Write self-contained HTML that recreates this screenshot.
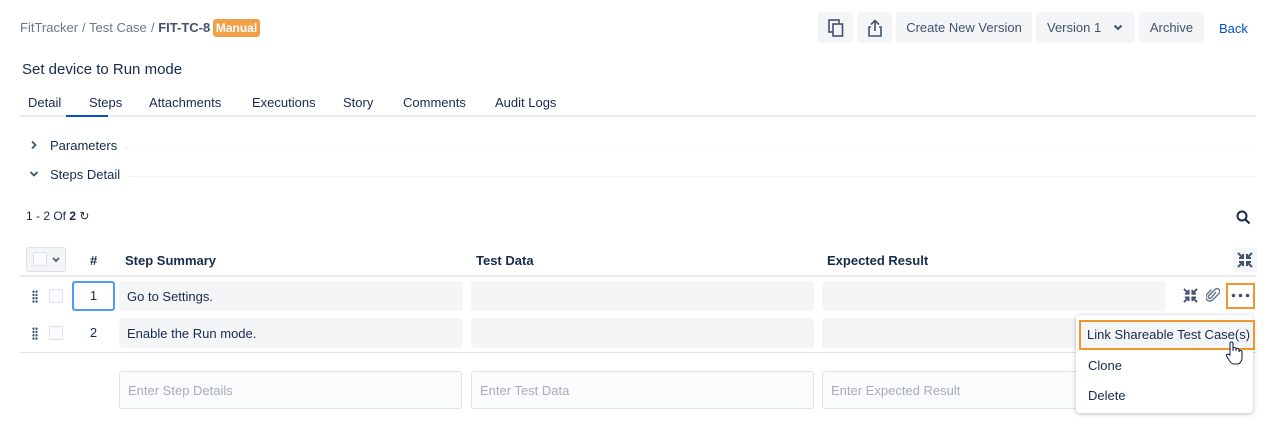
<!DOCTYPE html>
<html><head><meta charset="utf-8"><style>
*{box-sizing:border-box;margin:0;padding:0}
body{width:1280px;height:430px;position:relative;background:#fff;font-family:"Liberation Sans",sans-serif;color:#172b4d;overflow:hidden}
.a{position:absolute;white-space:nowrap}
.btn{position:absolute;top:12px;height:31px;background:#f4f5f7;border-radius:3px;font-size:13px;color:#42526e;display:flex;align-items:center;justify-content:center}
.cell{position:absolute;background:#f4f5f7;border-radius:3px;font-size:13px;padding-left:8px;display:flex;align-items:center}
.inp{position:absolute;top:371px;height:38px;border:1px solid #dfe1e6;background:#fafbfc;border-radius:3px;font-size:13px;color:#a5adba;padding-left:8px;display:flex;align-items:center}
.cb{position:absolute;width:14px;height:14px;border:1px solid #dfe1e6;border-radius:2px;background:#fafbfc}
.tab{position:absolute;top:95px;font-size:13px;color:#172b4d}
.hd{position:absolute;top:253px;font-size:13px;font-weight:bold}
.drag{position:absolute;width:6px;height:13px;background-image:radial-gradient(circle,#42526e 1.1px,transparent 1.3px);background-size:3px 3.3px}
</style></head><body>
<div class="a" style="left:20px;top:20px;font-size:13px;color:#6b778c">FitTracker</div>
<div class="a" style="left:82px;top:20px;font-size:13px;color:#6b778c">/ Test Case</div>
<div class="a" style="left:151px;top:20px;font-size:13px;color:#6b778c">/ <b style="color:#42526e">FIT-TC-8</b></div>
<div class="a" style="left:213px;top:19px;width:47px;height:18px;background:#f0a045;border-radius:3px;color:#fff;font-size:12px;font-weight:bold;text-align:center;line-height:18px">Manual</div>
<div class="btn" style="left:818px;width:35px"><svg width="16" height="18" viewBox="0 0 16 18"><rect x="1" y="1" width="10" height="12" fill="none" stroke="#42526e" stroke-width="1.6"/><rect x="5" y="5" width="9.5" height="12" fill="#f4f5f7" stroke="#42526e" stroke-width="1.6"/></svg></div>
<div class="btn" style="left:857px;width:35px"><svg width="16" height="18" viewBox="0 0 16 18"><path d="M8 12V2M4 5.5 8 1.5l4 4M4 8H2v9h12V8h-2" fill="none" stroke="#42526e" stroke-width="1.6"/></svg></div>
<div class="btn" style="left:896px;width:136px">Create New Version</div>
<div class="btn" style="left:1036px;width:99px;justify-content:flex-start;padding-left:11px">Version 1<svg style="margin-left:12px" width="10" height="7" viewBox="0 0 10 7"><path d="M1.5 1.5 5 5l3.5-3.5" fill="none" stroke="#42526e" stroke-width="2"/></svg></div>
<div class="btn" style="left:1139px;width:65px">Archive</div>
<div class="a" style="left:1219px;top:21px;font-size:13px;color:#0052cc">Back</div>
<div class="a" style="left:22px;top:61px;font-size:15px">Set device to Run mode</div>
<div class="tab" style="left:28px">Detail</div>
<div class="tab" style="left:89px">Steps</div>
<div class="tab" style="left:149px">Attachments</div>
<div class="tab" style="left:252px">Executions</div>
<div class="tab" style="left:343px">Story</div>
<div class="tab" style="left:403px">Comments</div>
<div class="tab" style="left:495px">Audit Logs</div>
<div class="a" style="left:20px;top:115px;width:1236px;height:2px;background:#ebecf0"></div>
<div class="a" style="left:66px;top:115px;width:42px;height:2px;background:#0052cc"></div>
<svg class="a" style="left:30px;top:140px" width="8" height="10" viewBox="0 0 8 10"><path d="M2 1.5 5.5 5 2 8.5" fill="none" stroke="#42526e" stroke-width="1.8"/></svg>
<div class="a" style="left:50px;top:138px;font-size:13px">Parameters</div>
<div class="a" style="left:124px;top:147px;width:1132px;border-top:1px dotted #ebecf0"></div>
<svg class="a" style="left:29px;top:170px" width="10" height="8" viewBox="0 0 10 8"><path d="M1.5 2 5 5.5 8.5 2" fill="none" stroke="#42526e" stroke-width="1.8"/></svg>
<div class="a" style="left:50px;top:167px;font-size:13px">Steps Detail</div>
<div class="a" style="left:128px;top:176px;width:1128px;border-top:1px dotted #ebecf0"></div>
<div class="a" style="left:26px;top:209px;font-size:12px">1 - 2 Of <b>2</b> ↻</div>
<svg class="a" style="left:1236px;top:210px" width="15" height="15" viewBox="0 0 15 15"><circle cx="6" cy="6" r="4.5" fill="none" stroke="#172b4d" stroke-width="2"/><path d="M9.5 9.5 13.5 13.5" stroke="#172b4d" stroke-width="2.2"/></svg>
<div class="a" style="left:26px;top:247px;width:40px;height:25px;border:1px solid #dfe1e6;background:#f4f5f7;border-radius:3px"></div>
<div class="cb" style="left:33px;top:252px"></div>
<svg class="a" style="left:52px;top:257px" width="8" height="6" viewBox="0 0 8 6"><path d="M1 1 4 4 7 1" fill="none" stroke="#42526e" stroke-width="1.6"/></svg>
<div class="hd" style="left:90px">#</div>
<div class="hd" style="left:125px">Step Summary</div>
<div class="hd" style="left:476px">Test Data</div>
<div class="hd" style="left:827px">Expected Result</div>
<div class="a" style="left:1233px;top:248px;width:24px;height:24px;background:#f4f5f7;border-radius:3px"></div>
<svg class="a" style="left:1237px;top:252px" width="16" height="16" viewBox="0 0 16 16"><path d="M1 1l5 5M6 2v4H2M15 1l-5 5M10 2v4h4M1 15l5-5M6 14v-4H2M15 15l-5-5M10 14v-4h4" fill="none" stroke="#42526e" stroke-width="2"/></svg>
<div class="a" style="left:20px;top:275px;width:1236px;height:2px;background:#ebecf0"></div>
<div class="drag" style="left:32px;top:290px"></div>
<div class="cb" style="left:49px;top:289px"></div>
<div class="a" style="left:72px;top:281px;width:43px;height:30px;border:2px solid #4c9aff;border-radius:3px;font-size:13px;text-align:center;line-height:26px">1</div>
<div class="cell" style="left:119px;top:281px;width:344px;height:30px">Go to Settings.</div>
<div class="cell" style="left:471px;top:281px;width:343px;height:30px"></div>
<div class="cell" style="left:822px;top:281px;width:343px;height:30px"></div>
<svg class="a" style="left:1183px;top:288px" width="15" height="15" viewBox="0 0 16 16"><path d="M1 1l5 5M6 2v4H2M15 1l-5 5M10 2v4h4M1 15l5-5M6 14v-4H2M15 15l-5-5M10 14v-4h4" fill="none" stroke="#42526e" stroke-width="2"/></svg>
<svg class="a" style="left:1206px;top:287px" width="14" height="16" viewBox="0 0 14 16"><path d="M10 5 5 11a1.6 1.6 0 0 1-2.3-2.2L9 2.5a2.8 2.8 0 0 1 4 4L6.5 13a4 4 0 0 1-5.7-5.6L5.5 2.5" fill="none" stroke="#6b778c" stroke-width="1.5"/></svg>
<div class="a" style="left:1226px;top:283px;width:29px;height:26px;border:2px solid #f0962a"></div>
<svg class="a" style="left:1231px;top:293px" width="20" height="5" viewBox="0 0 20 5"><circle cx="2.5" cy="2.5" r="1.8" fill="#42526e"/><circle cx="9.5" cy="2.5" r="1.8" fill="#42526e"/><circle cx="16.5" cy="2.5" r="1.8" fill="#42526e"/></svg>
<div class="drag" style="left:32px;top:327px"></div>
<div class="cb" style="left:49px;top:326px"></div>
<div class="a" style="left:72px;top:325px;width:43px;font-size:13px;text-align:center">2</div>
<div class="cell" style="left:119px;top:318px;width:344px;height:30px">Enable the Run mode.</div>
<div class="cell" style="left:471px;top:318px;width:343px;height:30px"></div>
<div class="cell" style="left:822px;top:318px;width:343px;height:30px"></div>
<div class="a" style="left:20px;top:352px;width:1236px;height:1px;background:#dfe1e6"></div>
<div class="inp" style="left:119px;width:343px">Enter Step Details</div>
<div class="inp" style="left:471px;width:343px">Enter Test Data</div>
<div class="inp" style="left:822px;width:343px">Enter Expected Result</div>
<div class="a" style="left:1076px;top:315px;width:177px;height:98px;background:#fff;border-radius:4px;box-shadow:0 1px 5px rgba(9,30,66,.3)"></div>
<div class="a" style="left:1079px;top:320px;width:176px;height:30px;border:2.5px solid #f0962a;background:#f4f5f7;font-size:13px;padding-left:6px;line-height:25px">Link Shareable Test Case(s)</div>
<div class="a" style="left:1088px;top:358px;font-size:13px">Clone</div>
<div class="a" style="left:1088px;top:388px;font-size:13px">Delete</div>
<svg class="a" style="left:1224px;top:340px" width="20" height="26" viewBox="0 0 20 26"><path d="M6 15V3.5a1.5 1.5 0 0 1 3 0V11v-2a1.5 1.5 0 0 1 3 0v2-1a1.5 1.5 0 0 1 3 0v2a1.5 1.5 0 0 1 3 0v6c0 3-2 6-5 6H10c-2 0-3-1-4-2.5L2.5 16a1.5 1.5 0 0 1 2.5-1.5z" fill="#fff" stroke="#172b4d" stroke-width="1.1"/></svg>
</body></html>
